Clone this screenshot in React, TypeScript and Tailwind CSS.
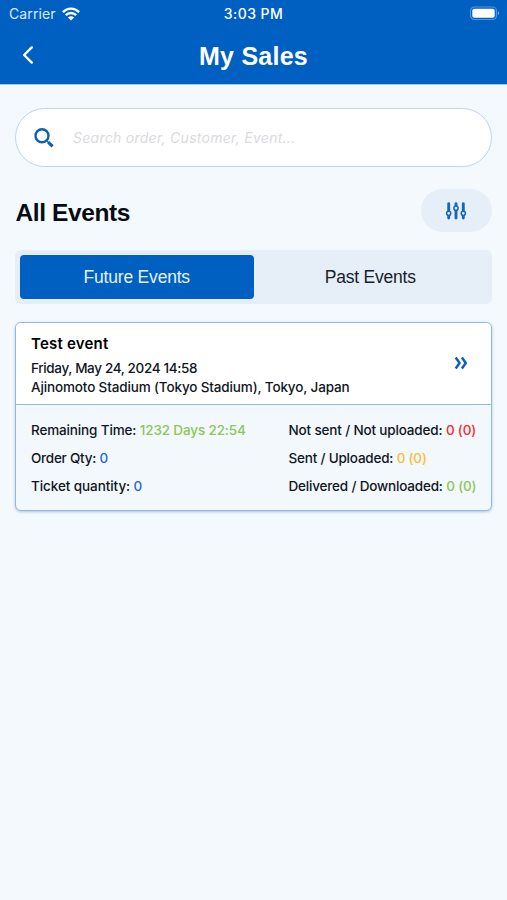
import type { ReactNode } from 'react';

function StatusBar() {
  return (
    <div className="grid h-[27px] grid-cols-3 items-center pl-[9px] pr-[7px] font-[Inter,sans-serif] text-[13.5px] leading-[26px] text-white">
      <div className="flex items-center gap-[6px]">
        <span className="text-[14px] tracking-[0.1px] text-[#dceaff]">Carrier</span>
        <svg width="18" height="14" viewBox="0 0 18 14" fill="none" stroke="white" strokeWidth="2.4">
          <path d="M0.9 5.1C5.5 .5 12.5 .5 17.1 5.1" />
          <path d="M3.8 8.2C6.8 5.3 11.2 5.3 14.2 8.2" />
          <path d="M9 13.6L5.9 10.6Q9 7.9 12.1 10.6Z" fill="white" stroke="none" />
        </svg>
      </div>
      <span className="pr-[2px] text-center text-[14px] font-medium tracking-[0.45px]">3:03 PM</span>
      <svg className="justify-self-end" width="31" height="15" viewBox="0 0 31 15">
        <rect x="1.5" y="1" width="26" height="12.5" rx="4" fill="none" stroke="#5594db" strokeWidth="1.2" />
        <rect x="3.3" y="2.8" width="22.4" height="8.9" rx="2" fill="white" />
        <path d="M29 5.2Q31 7.2 29 9.2Z" fill="#8bb8ea" />
      </svg>
    </div>
  );
}

function Header() {
  return (
    <header className="h-[85px] border-b border-[#a5cbf4] bg-[#0060c2]">
      <StatusBar />
      <div className="grid h-14 grid-cols-[60px_1fr_60px] items-center">
        <svg className="ml-[22px]" width="12" height="20" viewBox="0 0 12 20" fill="none" stroke="white" strokeWidth="2.4" strokeLinecap="round" strokeLinejoin="round">
          <path d="M9.8 2.4L2.1 10L9.8 17.6" />
        </svg>
        <h1 className="pt-px text-center text-[25px] leading-8 font-bold tracking-[0.25px] text-white">My Sales</h1>
      </div>
    </header>
  );
}

function Stat({ label, value, color, spacing }: { label: string; value: string; color: string; spacing: string }) {
  return (
    <p className={`whitespace-nowrap ${spacing}`}>
      {label} <span className={color}>{value}</span>
    </p>
  );
}

function Column({ children }: { children: ReactNode }) {
  return <div className="flex flex-col gap-2">{children}</div>;
}

function EventCard() {
  return (
    <section className="mt-[18px] h-[189px] overflow-hidden rounded-[6px] border-[1.5px] border-[#8db9e6] bg-[#f3f8fc] font-[Inter,sans-serif] text-[13.5px] font-[450] text-[#10151f] shadow-[0_1px_3px_rgba(70,120,170,0.4)]">
      <div className="flex h-[82px] items-center justify-between border-b border-[#8db9e6] bg-white pr-[23px] pl-[15px]">
        <div>
          <h3 className="text-[15px] leading-[21px] font-semibold tracking-[0.2px] text-black">Test event</h3>
          <p className="mt-[5px] leading-[18px] tracking-[-0.35px]">Friday, May 24, 2024 14:58</p>
          <p className="relative top-px leading-[18px] tracking-[-0.14px]">Ajinomoto Stadium (Tokyo Stadium), Tokyo, Japan</p>
        </div>
        <svg className="relative -top-px" width="14" height="14" viewBox="0 0 14 14" fill="none" stroke="#0b5fbd" strokeWidth="2.5" strokeLinejoin="round">
          <path d="M1.7 1.6L5.6 7L1.7 12.4M7.9 1.6L11.8 7L7.9 12.4" />
        </svg>
      </div>
      <div className="grid grid-cols-[257.5px_1fr] pt-[15px] pl-[15px] leading-5">
        <Column>
          <Stat label="Remaining Time:" value="1232 Days 22:54" color="text-[#8bc857]" spacing="tracking-[-0.14px]" />
          <Stat label="Order Qty:" value="0" color="text-[#2469d8]" spacing="tracking-[-0.25px]" />
          <Stat label="Ticket quantity:" value="0" color="text-[#2469d8]" spacing="tracking-[-0.08px]" />
        </Column>
        <Column>
          <Stat label="Not sent / Not uploaded:" value="0 (0)" color="text-[#f52c2c]" spacing="tracking-[-0.16px]" />
          <Stat label="Sent / Uploaded:" value="0 (0)" color="text-[#fbbd35]" spacing="tracking-[-0.2px]" />
          <Stat label="Delivered / Downloaded:" value="0 (0)" color="text-[#8bc857]" spacing="tracking-[-0.18px]" />
        </Column>
      </div>
    </section>
  );
}

export default function App() {
  return (
    <div className="h-[900px] w-[507px] overflow-hidden bg-[#f4f9fd] font-['Liberation_Sans',Arial,sans-serif]">
      <Header />
      <main className="px-[15px] pt-[23px]">
        <div className="flex h-[59px] items-center rounded-full border-[1.5px] border-[#bdd5ee] bg-white pl-[17px]">
          <svg width="22" height="22" viewBox="0 0 22 22" fill="none" stroke="#0b5fb5">
            <circle cx="9" cy="8.8" r="6.5" strokeWidth="2.4" />
            <path d="M14.2 14.2L15.3 15.3" strokeWidth="1.5" />
            <path d="M15.2 15.1L19.6 19.4" strokeWidth="3" />
          </svg>
          <span className="ml-[18px] font-[Inter,sans-serif] text-[14px] tracking-[0.27px] text-[#d9dbde] italic">Search order, Customer, Event...</span>
        </div>
        <div className="mt-[22px] flex h-[43px] items-center justify-between">
          <h2 className="pt-[5px] pl-[0.5px] text-[24.5px] leading-8 font-bold tracking-[-0.4px] text-[#080c12]">All Events</h2>
          <button className="flex h-[43px] w-[71px] items-center justify-center rounded-full bg-[#e6eff8]">
            <svg className="mr-px" width="22" height="20" viewBox="0 0 22 20" fill="none" stroke="#1767b7" strokeWidth="2.9" strokeLinecap="round">
              <path d="M3.7 2.8V10M3.7 14.5V17M11 2.8V4.7M11 9V17M18.3 2.8V10M18.3 14.5V17" />
              <g fill="#e6eff8" strokeWidth="1.5">
                <circle cx="3.7" cy="12.3" r="2.1" />
                <circle cx="11" cy="7.2" r="2.1" />
                <circle cx="18.3" cy="12.3" r="2.1" />
              </g>
            </svg>
          </button>
        </div>
        <div className="mt-[18px] grid h-[54px] grid-cols-2 rounded-[6px] bg-[#e6eff8] p-[5px] text-[17.5px] leading-[45px] tracking-[-0.2px]">
          <button className="h-11 rounded-[4px] bg-[#0060c2] text-[#e5f1ff]">Future Events</button>
          <button className="h-11 text-[#17202c]">Past Events</button>
        </div>
        <EventCard />
      </main>
    </div>
  );
}
